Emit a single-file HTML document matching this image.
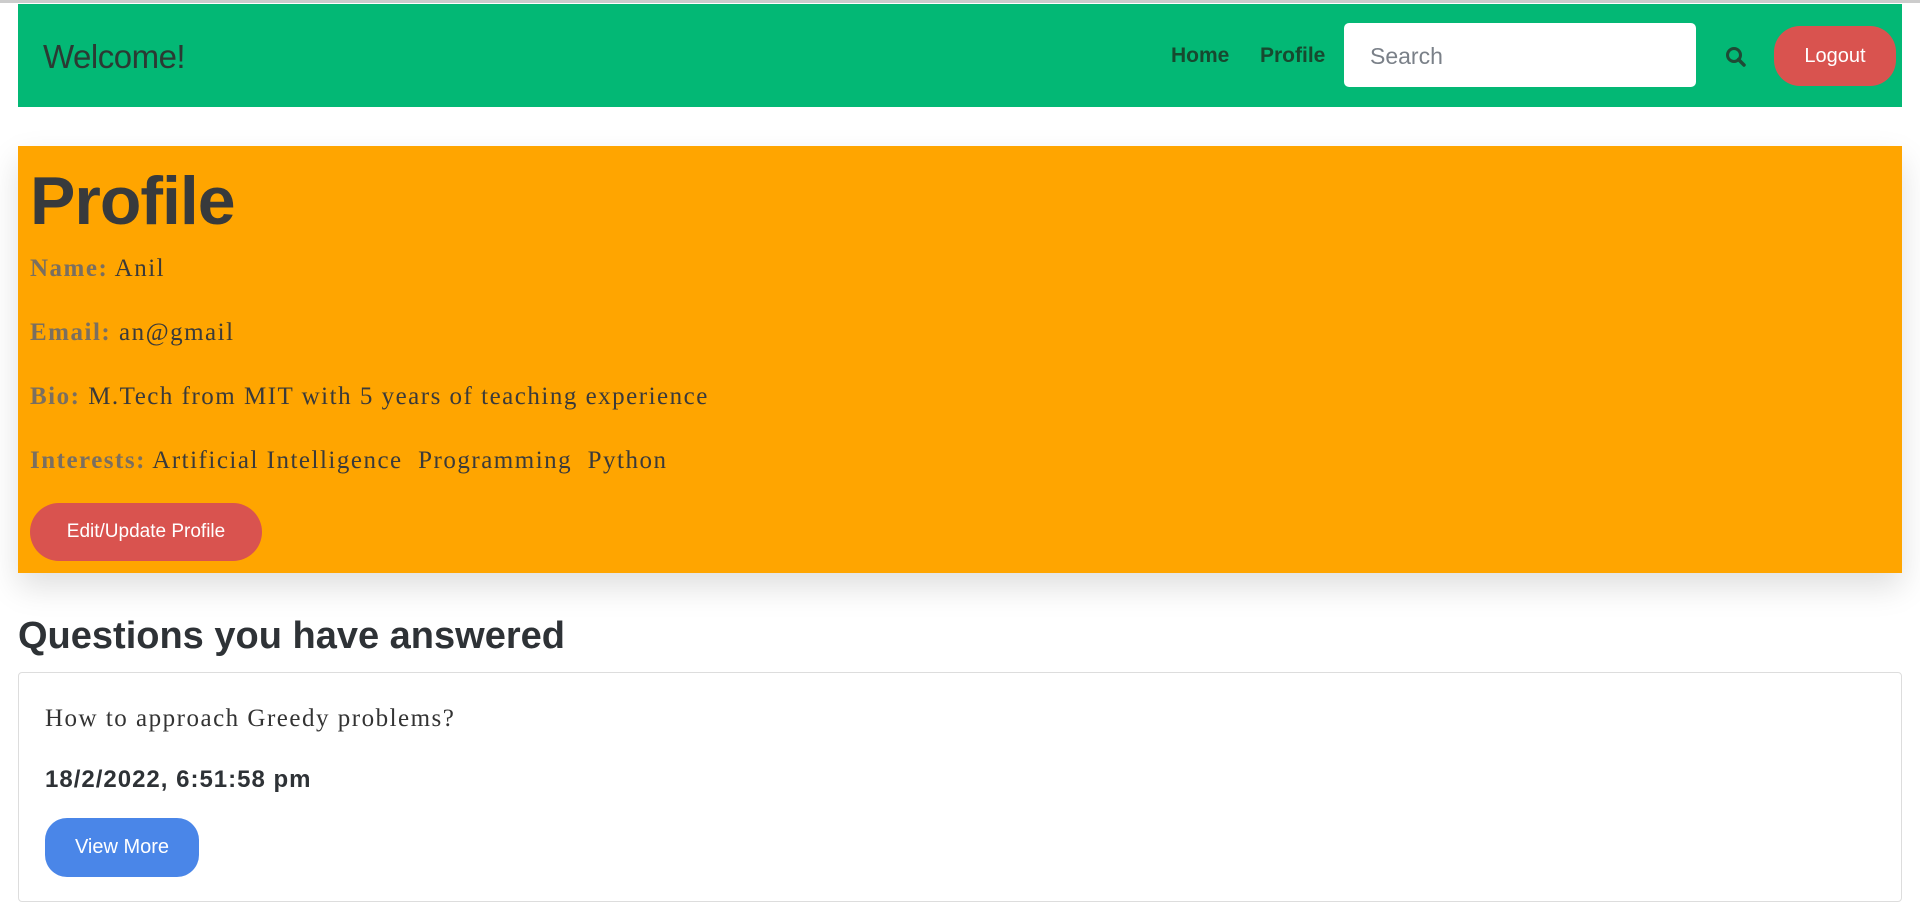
<!DOCTYPE html>
<html><head><style>
body{margin:0;width:1920px;height:916px;background:#fff;position:relative;overflow:hidden;font-family:"Liberation Sans",sans-serif;color:#343a40}
.a{position:absolute}
.top{left:0;top:0;width:1920px;height:3px;background:#ccc}
nav{position:absolute;left:18px;top:4px;width:1884px;height:103px;background:#03b875}
.brand{left:25px;top:34px;font-size:33px;color:#2b3a33;letter-spacing:-0.5px}
.nl{top:40px;font-size:21px;font-weight:bold;color:#17492f}
.search{left:1326px;top:19px;width:352px;height:64px;background:#fff;border-radius:5px}
.search span{position:absolute;left:26px;top:20px;font-size:23px;color:#7a8088}
.logout{left:1756px;top:22px;width:122px;height:60px;background:#d9534f;border-radius:26px;color:#fff;font-size:20px;text-align:center;line-height:60px}
.card{left:18px;top:146px;width:1884px;height:427px;background:#ffa500;box-shadow:0 14px 30px rgba(0,0,0,0.13)}
h1{position:absolute;margin:0;left:12px;top:16px;font-size:68px;font-weight:bold;color:#383a3c;letter-spacing:-1px}
.f{position:absolute;left:12px;font-family:"Liberation Serif",serif;font-size:25px;color:#3a3a3a;letter-spacing:1.5px}
.f b{color:#7a6f60}
.edit{left:12px;top:357px;width:232px;height:58px;background:#d9534f;border-radius:29px;color:#fff;font-size:19px;text-align:center;line-height:58px}
h2{position:absolute;margin:0;left:18px;top:615px;font-size:38px;font-weight:bold;color:#2e3236}
.ans{left:18px;top:672px;width:1882px;height:228px;border:1px solid #ddd;border-radius:4px}
.q{left:26px;top:32px;font-family:"Liberation Serif",serif;font-size:25px;color:#333;letter-spacing:1.5px}
.d{left:26px;top:93px;font-size:24px;font-weight:bold;color:#2e3236;letter-spacing:1px}
.vm{left:26px;top:145px;width:154px;height:59px;background:#4a86e8;border-radius:22px;color:#fff;font-size:20px;text-align:center;line-height:59px}
</style></head><body>
<div class="a top"></div>
<nav>
<div class="a brand">Welcome!</div>
<div class="a nl" style="left:1153px">Home</div>
<div class="a nl" style="left:1242px">Profile</div>
<div class="a search"><span>Search</span></div>
<svg class="a" style="left:1707px;top:42px" width="22" height="22" viewBox="0 0 22 22"><circle cx="9" cy="9" r="6.5" fill="none" stroke="#1f4a35" stroke-width="3"/><line x1="13.5" y1="13.5" x2="19" y2="19" stroke="#1f4a35" stroke-width="3.5" stroke-linecap="round"/></svg>
<div class="a logout">Logout</div>
</nav>
<div class="a card">
<h1>Profile</h1>
<div class="f" style="top:109px"><b>Name:</b> Anil</div>
<div class="f" style="top:173px"><b>Email:</b> an@gmail</div>
<div class="f" style="top:237px"><b>Bio:</b> M.Tech from MIT with 5 years of teaching experience</div>
<div class="f" style="top:301px"><b>Interests:</b> Artificial Intelligence&nbsp; Programming&nbsp; Python</div>
<div class="a edit">Edit/Update Profile</div>
</div>
<h2>Questions you have answered</h2>
<div class="a ans">
<div class="a q">How to approach Greedy problems?</div>
<div class="a d">18/2/2022, 6:51:58 pm</div>
<div class="a vm">View More</div>
</div>
</body></html>
